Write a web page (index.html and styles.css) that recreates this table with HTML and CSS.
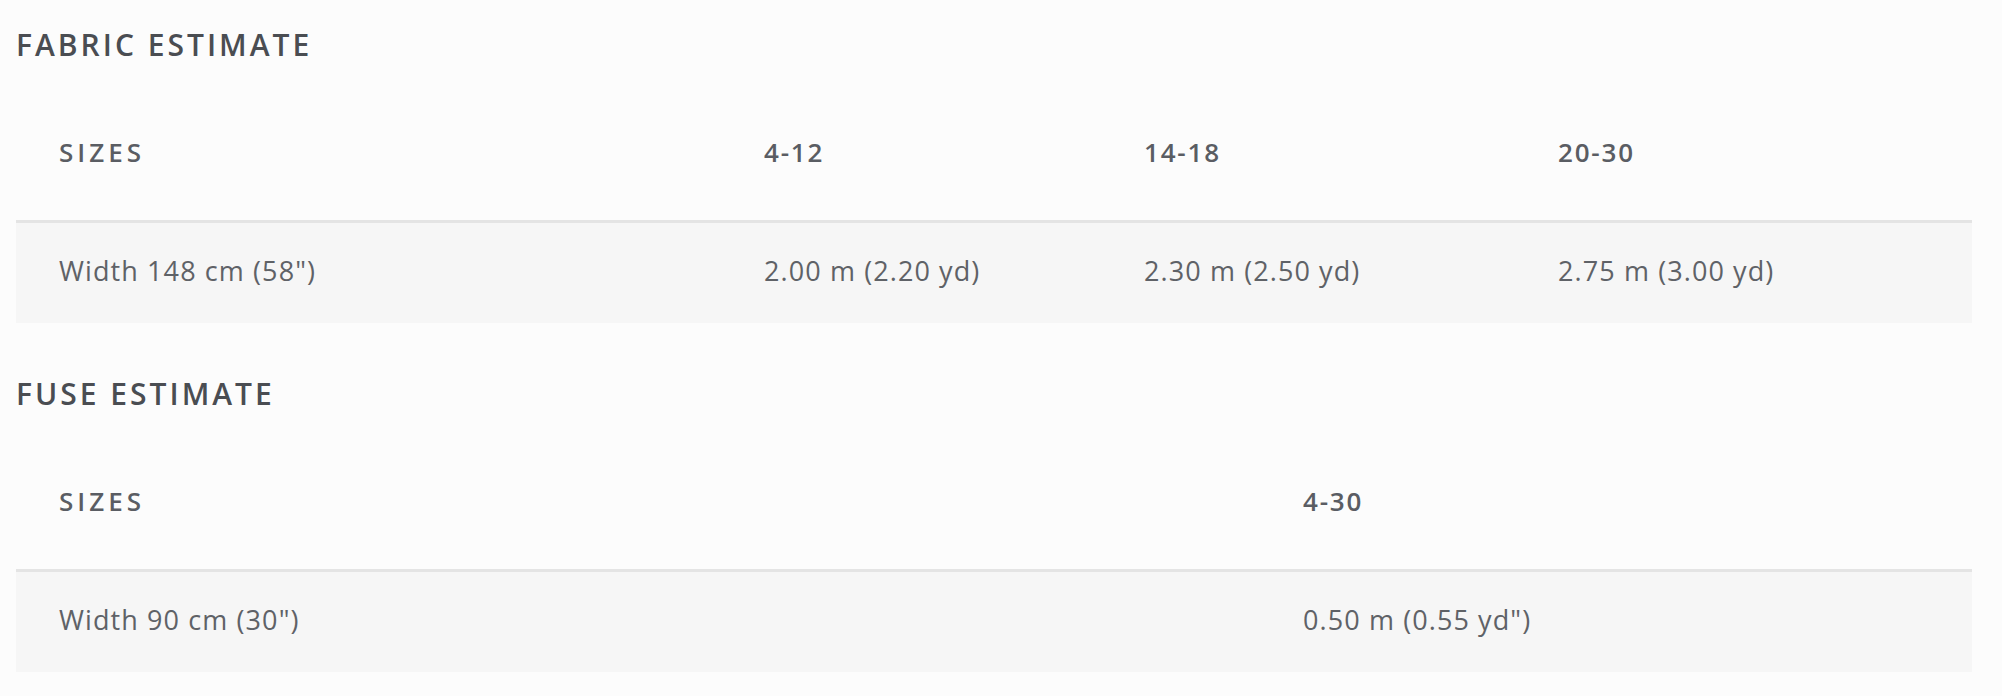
FILE: index.html
```html
<!DOCTYPE html>
<html lang="en">
<head>
<meta charset="utf-8">
<title>Fabric estimate</title>
<link rel="stylesheet" href="styles.css">
</head>
<body>
<main class="page">
  <section class="estimate">
    <h2 class="estimate-title">FABRIC ESTIMATE</h2>
    <table class="estimate-table">
      <colgroup>
        <col class="c-fabric-1"><col class="c-fabric-2"><col class="c-fabric-3"><col class="c-fabric-4">
      </colgroup>
      <thead>
        <tr><th class="label">SIZES</th><th>4-12</th><th>14-18</th><th>20-30</th></tr>
      </thead>
      <tbody>
        <tr><td>Width 148 cm (58")</td><td>2.00 m (2.20 yd)</td><td>2.30 m (2.50 yd)</td><td>2.75 m (3.00 yd)</td></tr>
      </tbody>
    </table>
  </section>
  <section class="estimate">
    <h2 class="estimate-title">FUSE ESTIMATE</h2>
    <table class="estimate-table">
      <colgroup>
        <col class="c-fuse-1"><col class="c-fuse-2">
      </colgroup>
      <thead>
        <tr><th class="label">SIZES</th><th>4-30</th></tr>
      </thead>
      <tbody>
        <tr><td>Width 90 cm (30")</td><td>0.50 m (0.55 yd")</td></tr>
      </tbody>
    </table>
  </section>
</main>
</body>
</html>
```
FILE: styles.css
```css
html, body {
  margin: 0;
  padding: 0;
  background: #fcfcfc;
}

.page {
  padding: 27px 30px 0 16px;
  font-family: "Open Sans", "Liberation Sans", sans-serif;
}

.estimate {
  margin-bottom: 53px;
}

.estimate-title {
  margin: 0 0 23px 0;
  font-size: 30px;
  line-height: 36px;
  font-weight: 600;
  letter-spacing: 3px;
  color: #4a4d52;
}

.estimate-table {
  width: 100%;
  border-collapse: collapse;
  table-layout: fixed;
}

.c-fabric-1 { width: 705px; }
.c-fabric-2 { width: 380px; }
.c-fabric-3 { width: 414px; }
.c-fabric-4 { width: 457px; }
.c-fuse-1 { width: 1244px; }
.c-fuse-2 { width: 712px; }

.estimate-table th {
  height: 132px;
  padding: 0 0 2px 43px;
  text-align: left;
  vertical-align: middle;
  font-size: 26px;
  font-weight: 600;
  letter-spacing: 1.8px;
  color: #5a5d63;
  border-bottom: 3px solid #e4e4e4;
}

.estimate-table th.label {
  letter-spacing: 4px;
}

.estimate-table td {
  height: 95px;
  padding: 0 0 5px 43px;
  vertical-align: middle;
  background: #f6f6f6;
  font-size: 27px;
  font-weight: 400;
  letter-spacing: 1.1px;
  color: #5f6267;
}
```
